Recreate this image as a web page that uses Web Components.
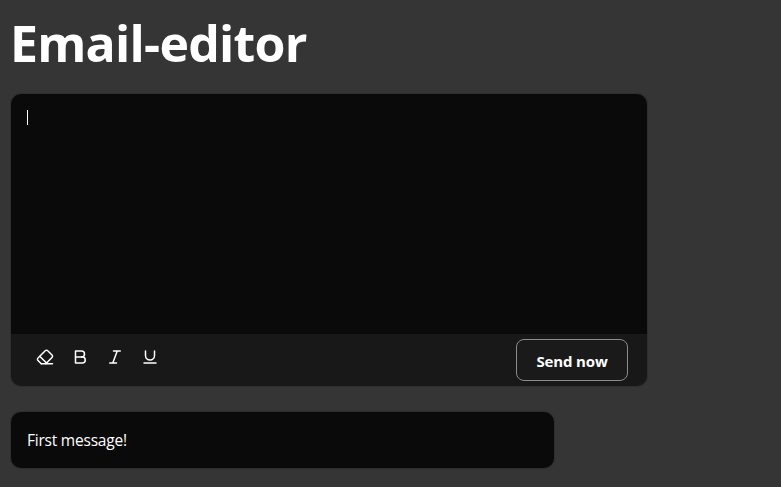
<!DOCTYPE html>
<html lang="en"><head><meta charset="utf-8"><title>Email-editor</title>
<style>
html,body{margin:0;height:100%;background:#353535;overflow:hidden}
body{color:#fff;font:16px/24px "Open Sans","Noto Sans",sans-serif}
</style></head><body>
<email-app></email-app>
<script>
function define(name, html){
  customElements.define(name, class extends HTMLElement{
    constructor(){
      super();
      const t=document.createElement('template');
      t.innerHTML=html;
      this.attachShadow({mode:'open'}).append(t.content.cloneNode(true));
    }
  });
}
const ICONS={
  eraser:'<path d="m7 21-4.3-4.3c-1-1-1-2.5 0-3.4l9.6-9.6c1-1 2.5-1 3.4 0l5.6 5.6c1 1 1 2.5 0 3.4L13 21"/><path d="M22 21H7"/><path d="m5 11 9 9"/>',
  bold:'<path d="M14 12a4 4 0 0 0 0-8H6v8"/><path d="M15 20a4 4 0 0 0 0-8H6v8Z"/>',
  italic:'<path d="M19 4h-9M14 20H5M15 4 9 20"/>',
  underline:'<path d="M6 4v6a6 6 0 0 0 12 0V4M4 20h16"/>'
};
customElements.define('tool-icon', class extends HTMLElement{
  constructor(){super();this.attachShadow({mode:'open'});}
  connectedCallback(){
    this.shadowRoot.innerHTML=`<style>:host{display:block;width:18px;height:18px}svg{display:block}</style>
    <svg width="18" height="18" viewBox="0 0 24 24" fill="none" stroke="currentColor" stroke-width="2" stroke-linecap="round" stroke-linejoin="round">${ICONS[this.getAttribute('name')]}</svg>`;
  }
});
define('send-button',`<style>
:host{display:block}
button{box-sizing:border-box;display:block;width:112px;height:42px;margin:0;padding:2px 0 0;border:1px solid #8b8b8b;border-radius:8px;background:#1a1a1a;color:#fff;font:700 15px/24px "Open Sans",sans-serif;letter-spacing:-.15px;text-align:center;white-space:nowrap}
</style><button><slot></slot></button>`);
define('editor-toolbar',`<style>
:host{display:flex;justify-content:space-between;box-sizing:border-box;height:52px;padding:5px 19px 0 25px;background:#181818}
.tools{display:flex;gap:17.1px;padding-top:9px}
</style><div class="tools"><tool-icon name="eraser"></tool-icon><tool-icon name="bold"></tool-icon><tool-icon name="italic"></tool-icon><tool-icon name="underline"></tool-icon></div><send-button>Send now</send-button>`);
define('text-editor',`<style>
:host{display:block;width:636px;border-radius:10px;overflow:hidden;box-shadow:0 0 0 1px #2e2e2e}
.area{box-sizing:border-box;height:240px;padding:16px;background:#0a0a0a}
.caret{width:1px;height:15px;background:#fff}
</style><div class="area"><div class="caret"></div></div><editor-toolbar></editor-toolbar>`);
define('message-card',`<style>
:host{display:block;box-sizing:border-box;width:543px;height:56px;margin-top:26px;padding:16px;border-radius:10px;background:#0a0a0a;font:15.5px/24px "Open Sans",sans-serif;letter-spacing:-.22px;box-shadow:0 0 0 1px #2e2e2e}
</style><slot></slot>`);
define('email-app',`<style>
:host{display:block;padding:15px 11px 0}
h1{margin:0 0 23px -1px;font:700 50px/56px "Open Sans",sans-serif;letter-spacing:-.75px;white-space:nowrap}
</style><h1>Email-editor</h1><text-editor></text-editor><message-card>First message!</message-card>`);
</script></body></html>
